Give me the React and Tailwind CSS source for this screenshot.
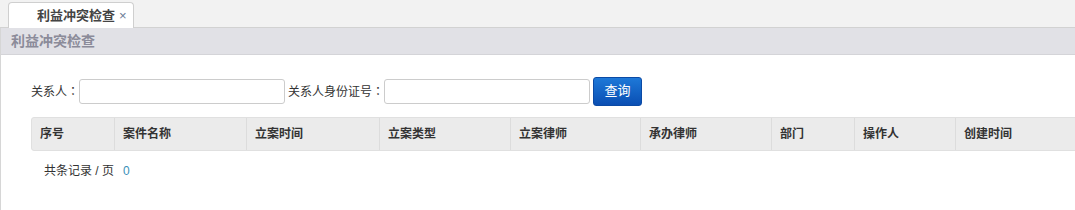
import React from "react";

const cols = [
  { t: "序号", w: 83 },
  { t: "案件名称", w: 132 },
  { t: "立案时间", w: 133 },
  { t: "立案类型", w: 131 },
  { t: "立案律师", w: 130 },
  { t: "承办律师", w: 131 },
  { t: "部门", w: 83 },
  { t: "操作人", w: 101 },
  { t: "创建时间", w: 130 },
];

const colon = { fontFamily: '"Noto Sans CJK TC", sans-serif' };

export default function App() {
  return (
    <div
      className="w-[1075px] h-[210px] bg-white overflow-hidden text-[12px] text-[#333]"
      style={{ fontFamily: '"Liberation Sans", "Noto Sans CJK SC", sans-serif' }}
    >
      {/* tab bar */}
      <div className="h-[28px] bg-[#f2f2f2] border-b border-[#d2d2d2] flex items-end pl-[8px]">
        <div className="h-[26px] w-[126px] bg-white border border-b-0 border-[#cfcfcf] rounded-t-[4px] flex items-center pl-[28px] -mb-px">
          <span className="font-bold text-[13px] text-[#444]">利益冲突检查</span>
          <span className="ml-[4px] text-[13px] leading-none text-[#6a7a94]">×</span>
        </div>
      </div>
      <div className="flex h-[182px]">
        <div className="w-[3px] bg-[#eeeeee] border-r border-[#d6d6d6]" />
        <div className="flex-1 flex flex-col">
          {/* panel header */}
          <div className="h-[27px] bg-[#e1e1e6] border-b border-[#d4d4d8] flex items-center pl-[10px]">
            <span className="font-bold text-[14px] text-[#8b8b99]">利益冲突检查</span>
          </div>
          {/* search row */}
          <div className="flex items-center mt-[21px] pl-[30px] h-[30px]">
            <span>关系人<span style={colon}>：</span></span>
            <div className="w-[206px] h-[25px] border border-[#cccccc] rounded-[3px] bg-white" />
            <span className="ml-[3px]">关系人身份证号<span style={colon}>：</span></span>
            <div className="w-[206px] h-[25px] border border-[#cccccc] rounded-[3px] bg-white" />
            <button className="ml-[3px] w-[49px] h-[29px] rounded-[3px] text-white text-[13px] bg-gradient-to-b from-[#1e78d8] to-[#0b4fb3] border border-[#0b4aa5]">
              查询
            </button>
          </div>
          {/* table header */}
          <div className="mt-[11px] ml-[30px] h-[34px] flex bg-[#ebebeb] border border-[#e0e0e0] rounded-l-[3px]">
            {cols.map((c, i) => (
              <div
                key={c.t}
                className={`h-full flex items-center pl-[8px] font-bold shrink-0 ${i < cols.length - 1 ? "border-r border-[#dcdcdc]" : ""}`}
                style={{ width: c.w }}
              >
                {c.t}
              </div>
            ))}
          </div>
          <div className="mt-[11px] ml-[43px] flex items-center">
            <span>共条记录 / 页</span>
            <span className="ml-[9px] text-[#3a8fb7]">0</span>
          </div>
        </div>
      </div>
    </div>
  );
}
